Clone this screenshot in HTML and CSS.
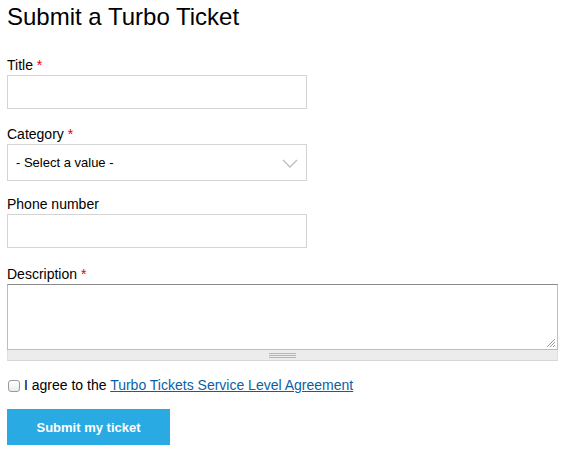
FILE: index.html
```html
<!DOCTYPE html>
<html lang="en">
<head>
<meta charset="utf-8">
<title>Submit a Turbo Ticket</title>
<link rel="stylesheet" href="styles.css">
</head>
<body>
<div class="page">
  <h1 class="heading">Submit a Turbo Ticket</h1>
  <form class="form">
    <div class="field field-first">
      <label class="label">Title <span class="req">*</span></label>
      <input class="input" type="text">
    </div>
    <div class="field">
      <label class="label">Category <span class="req">*</span></label>
      <div class="select">
        <span class="select-text">- Select a value -</span>
        <svg class="chev" width="16" height="9" viewBox="0 0 16 9"><path d="M1 1 L8 8 L15 1" fill="none" stroke="#bdbdbd" stroke-width="1.3"/></svg>
      </div>
    </div>
    <div class="field field-phone">
      <label class="label">Phone number</label>
      <input class="input" type="text">
    </div>
    <div class="field">
      <label class="label">Description <span class="req">*</span></label>
      <div class="textarea-wrap">
        <div class="textarea">
          <svg class="resize" width="11" height="11" viewBox="0 0 11 11"><path d="M10 2 L2 10 M10 5 L5 10 M10 8 L8 10" stroke="#999" stroke-width="1"/></svg>
        </div>
        <div class="grippie"><span class="grip"></span></div>
      </div>
    </div>
    <div class="agree">
      <span class="checkbox"></span>
      <span>I agree to the <a class="link" href="#">Turbo Tickets Service Level Agreement</a></span>
    </div>
    <div class="submit">Submit my ticket</div>
  </form>
</div>
</body>
</html>
```

FILE: styles.css
```css
* { box-sizing: border-box; }
html, body { margin: 0; padding: 0; background: #fff; }
body {
  font-family: "Liberation Sans", Arial, Helvetica, sans-serif;
  color: #000;
  font-size: 14px;
}
.page { padding: 3px 7px 0 7px; }
.heading {
  margin: 0 0 25px 0;
  font-size: 24px;
  line-height: 28px;
  font-weight: normal;
}
.form { display: flex; flex-direction: column; }
.field { display: flex; flex-direction: column; margin-bottom: 14px; }
.field-first { margin-bottom: 16px; }
.field-phone { margin-bottom: 17px; }
.label { display: block; font-size: 14px; line-height: 18px; margin-bottom: 1px; }
.req { color: #e00000; }
.input {
  display: block;
  width: 300px;
  height: 34px;
  border: 1px solid #d4d4d4;
  background: #fff;
  margin: 0;
  padding: 0 8px;
  font: inherit;
  outline: none;
}
.select {
  width: 300px;
  height: 37px;
  border: 1px solid #d4d4d4;
  display: flex;
  align-items: center;
  justify-content: space-between;
  padding: 0 8px 0 8px;
}
.select-text { font-size: 13px; }
.chev { margin-top: 2px; }
.textarea-wrap { width: 551px; }
.textarea {
  height: 66px;
  border-top: 1px solid #8a8a8a;
  border-left: 1px solid #bdbdbd;
  border-right: 1px solid #bdbdbd;
  border-bottom: 1px solid #bdbdbd;
  display: flex;
  justify-content: flex-end;
  align-items: flex-end;
  padding: 0 1px 1px 0;
}
.grippie {
  height: 11px;
  background: #ececec;
  border-bottom: 1px solid #d6d6d6;
  border-left: 1px solid #e0e0e0;
  border-right: 1px solid #e0e0e0;
  display: flex;
  justify-content: center;
  align-items: center;
}
.grip {
  width: 27px;
  height: 5px;
  border-top: 1px solid #b5b5b5;
  border-bottom: 1px solid #b5b5b5;
}
.grip::after {
  content: "";
  display: block;
  height: 0;
  border-top: 1px solid #b5b5b5;
  margin-top: 1px;
}
.agree {
  margin-top: 1px;
  display: flex;
  align-items: center;
  gap: 4px;
  font-size: 14px;
  line-height: 18px;
  padding-left: 1px;
}
.checkbox {
  display: inline-block;
  width: 12px;
  height: 12px;
  border: 1px solid #9a9a9a;
  border-radius: 3px;
  background: linear-gradient(#ffffff, #ececec);
  margin-top: 2px;
}
.link { color: #0b5fa5; text-decoration: underline; }
.submit {
  margin-top: 15px;
  width: 163px;
  height: 36px;
  background: #2aaae2;
  color: #fff;
  font-weight: bold;
  font-size: 13px;
  display: flex;
  align-items: center;
  justify-content: center;
}
```
